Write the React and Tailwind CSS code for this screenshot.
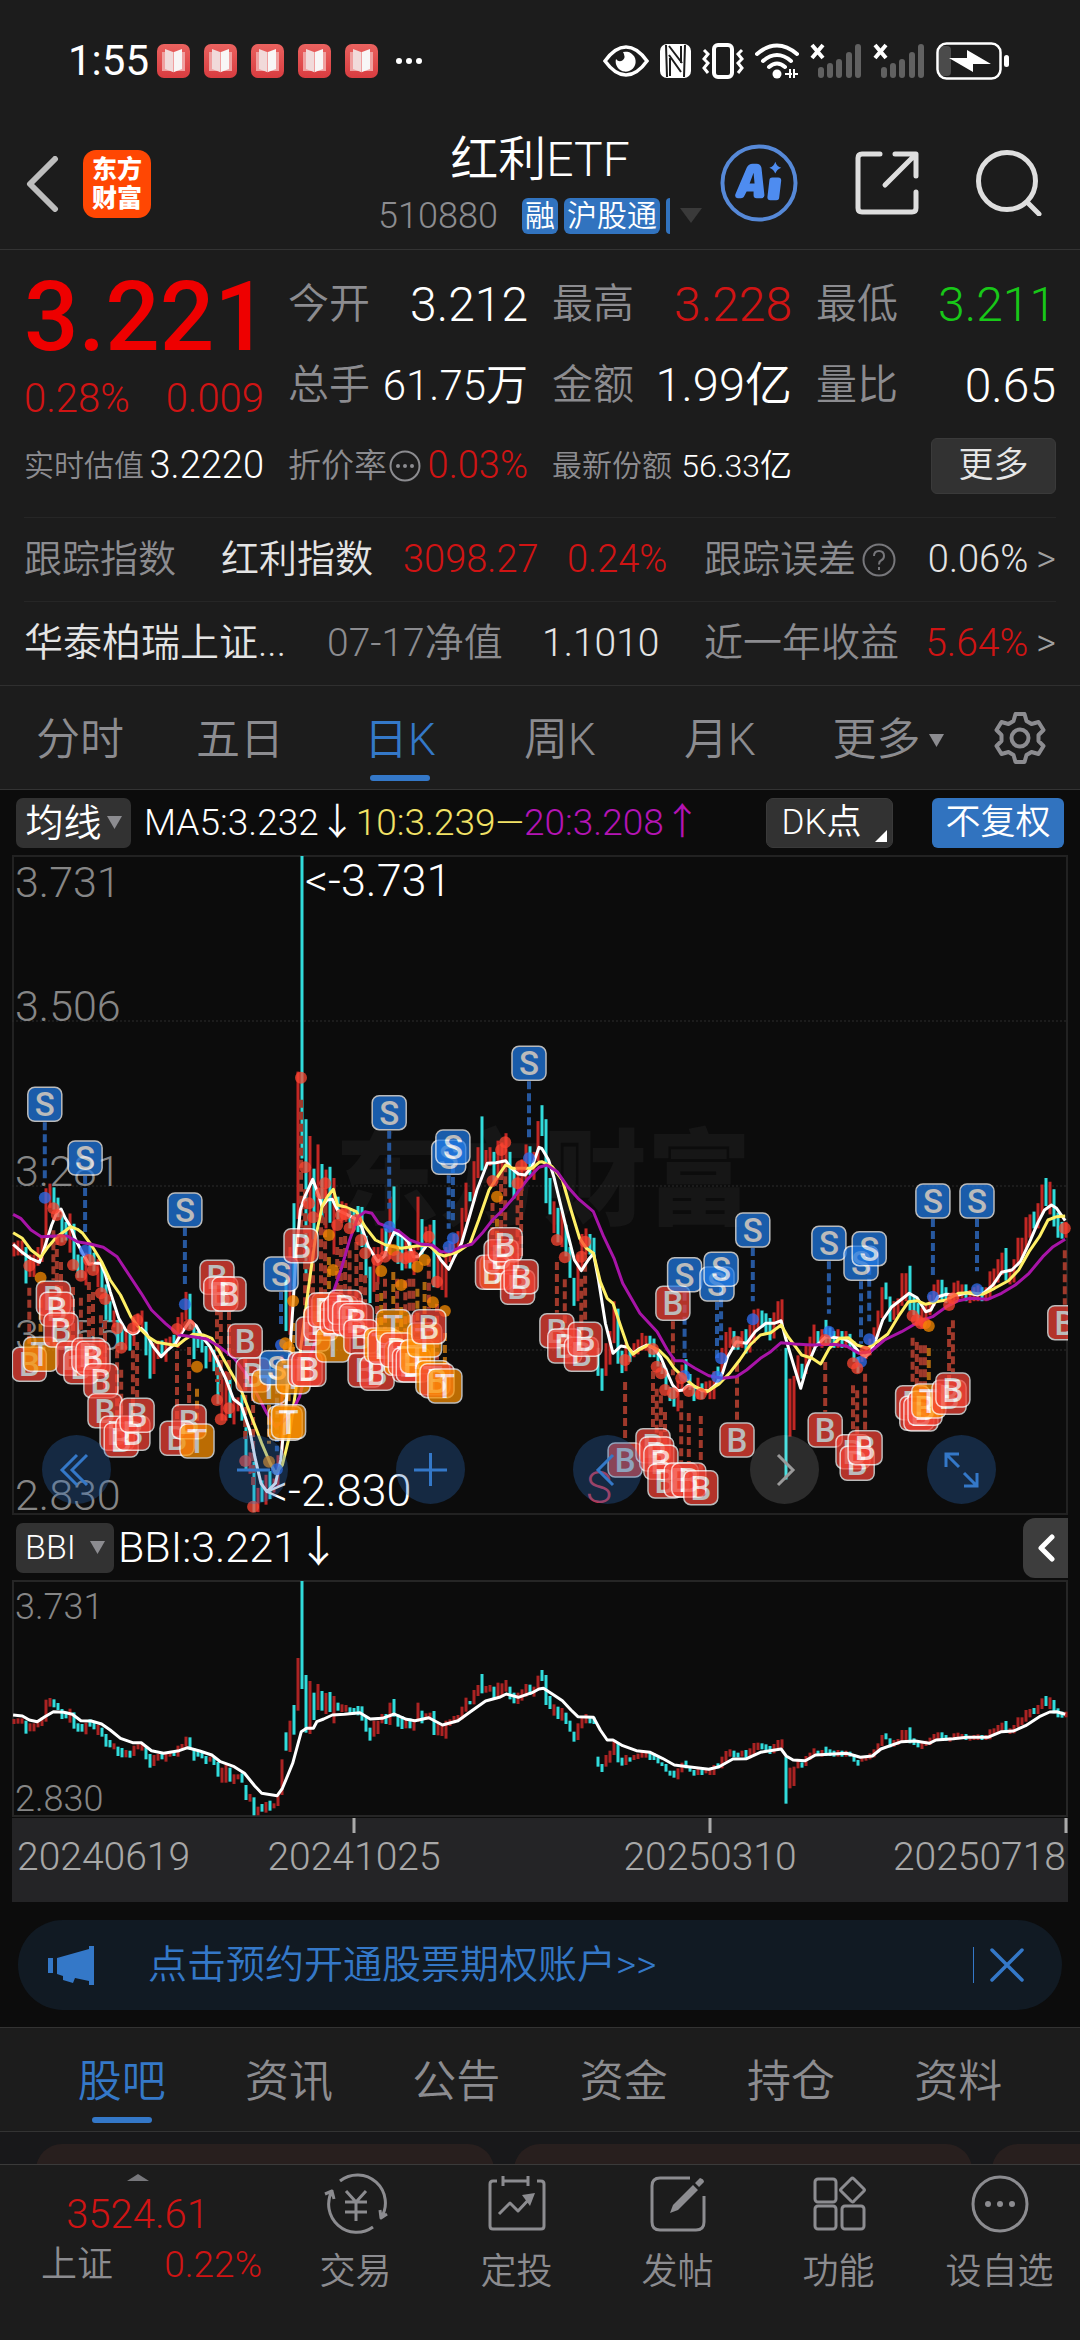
import React from 'react';

/* ---------- chart data ---------- */

// One entry per trading day: colour, top, bottom (third-pixel units of the lower chart).
const BARS = `r627-642 r625-641 r625-641 c632-671 r640-664 r640-664 r632-652 r622-648 r569-635 r564-590 c568-592 c579-600 c597-627 c605-625 r596-638 c607-656 c640-665 c642-665 r638-673 c628-650 c638-658 r645-675 c653-680 c672-710 c690-712 r700-718 c710-738 c714-742 r720-742 c722-743 r707-738 r703-718 r700-722 c712-748 c732-773 r735-768 r732-752 c732-748 r730-755 r728-740 c726-738 r707-740 r702-720 r680-710 c682-720 c715-752 c722-740 c728-745 c738-762 r740-755 c742-765 c756-800 r773-818 r765-818 c773-815 r793-822 r793-808 c790-818 c825-870 r852-875 c862-916 r890-916 c882-905 r876-908 c872-902 r880-895 r855-888 r748-855 c667-722 r632-726 c585-674 r444-602 c213-537 c495-668 r513-672 c548-630 r522-600 c543-602 r549-612 c546-606 r558-640 c578-602 r583-606 r585-605 c592-612 c594-614 c588-616 c589-632 c620-665 c653-692 r632-680 r632-672 r612-640 c612-642 r578-645 c567-620 c613-650 c618-657 r625-655 c625-655 r630-662 r578-635 c602-640 r610-630 r608-628 c603-675 r642-676 r648-678 r632-686 r628-648 r618-640 r615-632 r590-628 r563-605 c573-583 r540-583 r525-558 c492-550 r528-548 r525-545 c530-565 r518-560 r520-558 r510-545 c530-568 c548-580 r548-582 r538-572 r522-560 c524-555 r530-560 r497-540 c480-513 c495-585 c558-597 r583-617 c590-627 r594-632 c608-642 c632-665 c665-695 r640-690 r618-655 r612-640 c618-640 c622-642 c740-770 c762-786 r735-770 r722-758 r690-735 c698-757 c743-767 r735-765 c742-755 r735-750 r731-747 r724-743 r727-743 c727-750 c730-750 c742-760 c757-768 c762-785 c782-797 c782-803 r775-808 r758-787 c752-775 c768-785 c780-797 r772-795 c778-795 r776-790 r775-795 r765-795 c760-775 r740-775 r723-755 r718-740 c722-742 c728-742 r722-740 c720-746 r715-745 r699-735 r698-720 c700-718 c703-725 c708-732 r702-730 r690-715 r688-715 c740-881 r773-835 r770-828 r748-775 c757-773 r738-768 r728-750 r715-740 c722-738 r720-740 c710-738 c718-738 c722-740 r720-740 c722-740 r722-740 c725-740 c733-755 c750-767 r742-755 r738-752 r730-748 r718-742 r700-728 r675-708 c670-688 c685-712 r690-710 r687-705 r660-695 r660-690 c652-700 c685-705 c692-712 r697-717 r692-708 r683-705 r672-695 r667-690 c667-690 c675-692 r682-695 r670-690 r668-688 r672-687 c672-690 r678-692 r675-690 r673-690 c675-690 r675-690 r658-688 r655-675 r645-670 r638-662 c633-668 r655-672 r645-670 r622-652 r622-645 r600-635 r597-622 c594-612 r585-612 r565-597 c558-588 r562-597 c570-610 c595-622 c605-623 r605-622`
  .split(' ')
  .map((s, i) => {
    const [top, bottom] = s.slice(1).split('-').map(Number);
    return { x: 2 + i * 4, up: s[0] === 'r', top: (top - 213) / 3, bottom: (bottom - 213) / 3 };
  });

// Line series: "x,y" pairs, split in a left and a right half.
const HALF = 1568;
const px = (x, half) => Math.round(((x + half) / 2.9037 - 12) * 10) / 10;
const line = (left, right, toY) =>
  [[left, 0], [right, HALF]]
    .flatMap(([s, half]) =>
      s.split(' ').map((p) => {
        const [x, y] = p.split(',').map(Number);
        return `${px(x, half)},${Math.round(toY(y) * 10) / 10}`;
      })
    )
    .join(' ');
const mainY = (y) => y / 3 + 255;
const subY = (y) => (y - 213) / 3 + 1;

const MA5 = line(
  '38,403 62,425 88,445 115,457 130,410 150,345 165,308 177,297 190,325 205,350 220,390 240,430 258,463 275,460 292,460 305,490 320,545 345,625 365,660 385,672 398,668 410,655 425,670 445,710 468,740 485,722 510,700 530,665 552,632 570,648 590,685 610,710 630,750 655,805 678,868 700,885 725,960 740,1040 758,1120 775,1145 800,1120 815,1050 830,900 850,600 860,430 872,300 885,260 908,208 925,255 935,290 950,270 965,268 980,300 1000,310 1030,325 1050,350 1070,410 1097,455 1115,440 1130,400 1145,365 1170,380 1185,395 1200,440 1215,440 1240,405 1260,415 1280,450 1303,478 1320,440 1340,400 1360,330 1385,240 1415,160 1440,158 1468,152 1485,175 1505,192 1525,195 1545,170 1565,112',
  '5,115 25,150 40,200 60,285 80,370 100,450 120,482 140,450 155,430 170,510 190,640 212,730 235,708 255,712 270,730 290,715 310,705 330,715 350,740 370,790 385,825 400,842 415,840 430,825 450,830 470,842 490,842 510,825 530,790 545,740 570,695 600,700 625,665 655,640 680,640 700,632 712,680 735,760 757,835 775,770 800,710 830,680 860,683 885,688 905,700 925,725 945,740 960,725 975,690 995,630 1020,592 1050,568 1072,550 1095,563 1120,605 1135,600 1155,560 1180,553 1215,555 1240,548 1270,555 1290,548 1315,525 1340,487 1370,480 1395,455 1420,400 1445,340 1465,300 1485,285 1500,295 1525,332',
  mainY
);
const MA10 = line(
  '38,368 65,385 90,420 118,442 140,410 165,380 190,362 205,350 225,358 240,370 265,405 295,455 320,510 350,555 380,620 405,655 430,680 455,697 485,702 515,707 535,690 560,673 590,675 615,685 640,730 670,785 700,840 730,920 760,1000 785,1060 800,1090 820,1065 840,980 860,830 875,700 895,540 915,390 935,290 950,260 968,238 980,285 1000,290 1035,305 1060,350 1090,390 1120,405 1165,415 1210,408 1245,405 1270,430 1290,438 1330,425 1365,400 1390,330 1420,240 1445,200 1468,165 1490,175 1545,175 1565,157',
  '5,155 35,170 65,210 90,300 115,385 135,415 155,430 175,515 195,565 212,580 235,650 255,710 270,733 290,718 315,705 345,720 370,745 390,775 420,805 450,830 485,845 520,822 550,790 580,750 610,705 640,675 670,668 700,645 720,680 760,735 790,745 815,762 840,715 870,685 895,683 920,705 950,715 980,695 1010,672 1040,620 1070,575 1095,572 1120,583 1150,575 1180,570 1215,550 1250,548 1285,553 1320,535 1360,512 1390,480 1420,425 1450,380 1475,330 1500,320 1525,318',
  mainY
);
const MA20 = line(
  '38,313 60,325 90,360 120,380 160,378 195,378 225,395 265,403 300,412 340,440 375,495 410,550 440,600 480,640 520,675 560,680 600,687 640,712 680,745 720,800 750,860 775,910 800,950 840,920 870,860 900,740 930,650 960,570 990,480 1015,390 1040,320 1060,305 1080,310 1100,340 1130,352 1160,365 1190,390 1225,403 1255,405 1280,425 1310,425 1340,410 1370,403 1400,370 1430,330 1460,300 1490,265 1530,210 1565,172',
  '20,165 50,185 80,230 110,265 155,305 185,380 215,445 240,520 290,610 340,665 370,720 392,752 415,752 450,775 490,797 530,805 570,800 600,780 640,745 670,725 700,698 740,702 790,705 850,703 890,708 925,730 960,725 1000,690 1050,665 1100,635 1140,620 1180,590 1215,572 1250,565 1300,568 1340,550 1380,525 1420,490 1460,440 1490,410 1525,388',
  mainY
);
const BBI = line(
  '38,615 65,618 85,630 108,635 130,620 155,605 185,607 210,613 235,632 265,633 295,642 320,660 350,685 385,698 410,698 440,722 475,730 520,722 545,713 580,723 615,735 640,755 680,770 710,790 740,828 760,850 805,857 820,835 850,760 875,665 890,655 910,655 920,635 940,627 965,615 1000,613 1045,608 1075,627 1110,625 1145,612 1180,628 1205,632 1245,623 1285,645 1330,632 1370,602 1410,573 1450,562 1470,552 1505,562 1545,548 1565,537',
  '10,535 40,555 65,572 90,600 110,620 155,622 175,660 195,690 212,690 240,707 280,722 320,727 355,745 390,765 430,770 490,778 520,770 560,747 600,746 640,727 700,717 715,738 735,750 770,752 800,735 890,730 930,742 965,738 990,717 1050,695 1090,693 1130,700 1150,690 1200,686 1240,682 1300,682 1340,665 1375,663 1410,647 1450,620 1480,606 1500,605 1525,613',
  subY
);

// Trade markers: letter, x, badge y, dot y.
const marks = (s, half) =>
  s.split(' ').map((m) => {
    const [x, y, dot] = m.slice(1).split(',').map(Number);
    return { k: m[0], x: px(x, half), y: mainY(y), dot: mainY(dot) };
  });
const MARKS = [
  ...marks(
    'S130,-17,263 S247,144,422 S537,300,583 S1130,8,350 S1303,142,410 S1315,111,385 S1536,-140,145 B85,763,467 T118,733,503 B155,565,295 B165,598,315 B177,660,390 B212,745,465 B235,770,497 B258,735,450 B270,745,480 B293,812,550 B305,902,567 B340,970,655 B352,990,713 B386,970,655 B398,916,630 B514,985,657 B549,935,645 T572,993,770 B630,502,870 B641,552,928 B665,552,895 B712,693,1053 B735,795,1190 T781,830,1055 S816,492,705 S804,773,1078 T828,940,700 T838,935,712 T851,800,573 B874,407,-97 B886,778,172 B897,778,280 B909,672,322 B932,640,250 T955,600,375 T967,705,480 B944,600,220 B979,620,345 B990,610,315 B1002,592,312 B1015,625,355 B1035,632,330 B1048,680,390 B1060,780,430 B1095,790,450 T1107,705,483 B1118,712,440 T1142,650,420 T1165,745,525 B1153,720,440 B1177,745,445 B1189,765,440 B1200,765,440 T1212,740,470 T1233,690,450 B1245,650,380 T1257,803,577 B1269,812,515 T1292,828,603 T1443,487,260 B1430,487,213 B1455,440,120 B1467,404,97 B1503,532,220 B1513,500,168',
    0
  ),
  ...marks(
    'B49,662,390 B72,708,442 B120,733,440 B131,688,395 B247,1050,750 B386,580,850 S420,494,798 S514,522,800 S526,478,745 S618,360,628 B328,1007,717 B339,1032,770 B351,1057,790 B363,1113,840 B410,1110,805 B432,1110,843 B467,1133,852 B572,990,695 S839,400,665 B828,960,690 S932,460,755 S956,416,688 B909,1025,760 B921,1060,775 B944,1013,725 S1141,273,560 S1269,273,538 B1082,878,617 B1094,910,630 B1106,912,640 B1118,895,640 T1129,873,648 B1188,862,585 B1199,840,565 B1524,638,355',
    HALF
  ),
];
const MARK_FILL = { B: '#f44336', S: '#207be8', T: '#ff9200' };
const MARK_LINE = { B: '#a0392b', S: '#27589f', T: '#ab6710' };
const MARK_DOT = { B: '#fb4632', S: '#2f6df0', T: '#f58a00' };

const UP = '#c22724';
const DOWN = '#31dcdc';

/* ---------- small icons ---------- */

const BookBadge = () => (
  <svg className="h-[34px] w-[33px]" viewBox="0 0 33 34" aria-hidden="true">
    <defs>
      <linearGradient id="book" x1="0" y1="0" x2="0" y2="1">
        <stop offset="0" stopColor="#ea625f" />
        <stop offset="1" stopColor="#d93c40" />
      </linearGradient>
    </defs>
    <rect width="33" height="34" rx="7" fill="url(#book)" />
    <path d="M5 8h23v19H18l-1.500 1.500L15 27H5z" fill="#f0a0a0" />
    <path d="M8 5l8 3v20l-8-3z" fill="#f1dada" />
    <path d="M25 5l-8 3v20l8-3z" fill="#f8f6f6" />
  </svg>
);

const Signal = () => (
  <svg className="h-9 w-[52px]" viewBox="0 0 52 36" aria-hidden="true">
    <path d="M2 2l11 13M13 2L2 15" stroke="#fff" strokeWidth="4" />
    <g stroke="#616161" strokeWidth="6" strokeLinecap="round">
      <path d="M11 27v5M20 23v9M29 19v13M39 12v20M48 4v28" />
    </g>
  </svg>
);

const StatusIcons = () => (
  <div className="flex items-center gap-[11px]">
    <svg className="h-9 w-[46px]" viewBox="0 0 46 36" aria-hidden="true">
      <path d="M2 18Q12 4 23 4t21 14Q34 32 23 32T2 18z" fill="none" stroke="#fff" strokeWidth="3.500" />
      <path d="M20 9a10 10 0 1 1-7 7q3 4 7 1 3-3 0-8z" fill="#fff" />
    </svg>
    <svg className="h-[34px] w-[31px]" viewBox="0 0 31 34" aria-hidden="true">
      <rect width="31" height="34" rx="7" fill="#fff" />
      <path d="M6 1l1 32M25 1l-1 32" stroke="#1c1c1c" strokeWidth="2" />
      <path d="M9 2l13 17M9 11l12 17M10 14v18M21 2v17" stroke="#1c1c1c" strokeWidth="2" fill="none" />
    </svg>
    <svg className="h-9 w-[42px]" viewBox="0 0 42 36" aria-hidden="true">
      <rect x="12" y="2" width="18" height="32" rx="4" fill="none" stroke="#fff" strokeWidth="4" />
      <path d="M2 7l4 4-4 5 4 4-4 5 4 5M40 7l-4 4 4 5-4 4 4 5-4 5" fill="none" stroke="#fff" strokeWidth="3" />
    </svg>
    <svg className="h-9 w-[44px]" viewBox="0 0 44 36" aria-hidden="true">
      <g fill="none" stroke="#fff" strokeWidth="4" strokeLinecap="round">
        <path d="M2 11q20-17 40 0M8 18q14-12 28 0M14 24q8-7 16 0" />
      </g>
      <circle cx="22" cy="31" r="4.500" fill="#fff" />
      <path d="M30 31h7M35 26v9" stroke="#fff" strokeWidth="2" fill="none" />
      <path d="M39 26v9M43 31h-4" stroke="#fff" strokeWidth="2" fill="none" />
    </svg>
    <Signal />
    <Signal />
    <svg className="h-[38px] w-[74px]" viewBox="0 0 74 38" aria-hidden="true">
      <rect x="3" y="4" width="12" height="30" rx="4" fill="#4b4b4b" />
      <rect x="1.500" y="1.500" width="63" height="35" rx="9" fill="none" stroke="#fff" strokeWidth="2.500" />
      <path d="M13 16l18 0V8l24 14H37v8z" fill="#fff" />
      <rect x="68" y="13" width="5" height="12" rx="2.500" fill="#fff" />
    </svg>
  </div>
);

/* ---------- sections ---------- */

const Header = () => (
  <header className="border-b border-[#333333]">
    <div className="flex h-[122px] items-center justify-between pl-[68px] pr-[70px]">
      <div className="flex items-center">
        <span className="w-[89px] text-[42px] font-normal leading-[48px]">1:55</span>
        <span className="flex gap-[14px]">
          {[0, 1, 2, 3, 4].map((i) => (
            <BookBadge key={i} />
          ))}
        </span>
        <span className="ml-[18px] flex gap-1">
          {[0, 1, 2].map((i) => (
            <i key={i} className="size-[6px] rounded-full bg-white" />
          ))}
        </span>
      </div>
      <StatusIcons />
    </div>
    <div className="grid h-[127px] grid-cols-[1fr_auto_1fr] items-center">
      <div className="flex items-center gap-[22px] pb-1 pl-6">
        <button aria-label="返回" className="h-14 w-[37px]">
          <svg viewBox="0 0 37 56" className="size-full" fill="none" stroke="#bdbdbd" strokeWidth="6" strokeLinecap="round" strokeLinejoin="round">
            <path d="M31 3L6 28l25 25" />
          </svg>
        </button>
        <span className="grid size-[68px] place-content-center rounded-[13px] bg-[#ff4703] text-center text-[25px] font-black leading-[29px]">
          <span>东方</span>
          <span>财富</span>
        </span>
      </div>
      <div className="flex flex-col items-center">
        <h1 className="text-[48px] leading-[60px]">红利ETF</h1>
        <div className="flex h-[52px] items-center gap-[6px]">
          <span className="mr-[18px] text-[36px] text-[#8c8c90]">510880</span>
          <span className="rounded-[6px] bg-[#3173bf] px-[3px] text-[30px] leading-[36px]">融</span>
          <span className="rounded-[6px] bg-[#3173bf] px-[3px] text-[30px] leading-[36px]">沪股通</span>
          <span className="h-9 w-1 rounded-l-[4px] bg-[#3173bf]" />
          <svg className="ml-1 h-[15px] w-[22px]" viewBox="0 0 22 15" aria-hidden="true">
            <path d="M0 0h22L11 15z" fill="#3a3a3a" />
          </svg>
        </div>
      </div>
      <div className="flex items-center justify-end gap-[57px] pb-[6px] pr-[38px]">
        <button aria-label="AI" className="size-[78px]">
          <svg viewBox="0 0 79 79" className="size-full">
            <circle cx="39.500" cy="39.500" r="37" fill="none" stroke="#5689d8" strokeWidth="4" />
            <path
              d="M16 50L27 24q2-4 6-4h4q4 0 5 4l3 28q0 3-3 3h-5q-3 0-3-3v-4h-7l-2 4q-1 3-4 3h-3q-4-1-2-5zm14-10h5l-1-11z"
              fill="#4e8cf0"
            />
            <path d="M53 34h6q3 0 3 3l-2 17q0 3-3 3h-6q-3 0-3-3l2-17q0-3 3-3z" fill="#4e8cf0" />
            <path d="M56 18q1.500 5 6 6-4.500 1.500-6 6-1.500-4.500-6-6 4.500-1 6-6z" fill="#4e8cf0" />
          </svg>
        </button>
        <button aria-label="分享" className="size-[64px]">
          <svg viewBox="0 0 64 64" className="size-full" fill="none" stroke="#dedede" strokeWidth="5" strokeLinecap="round" strokeLinejoin="round">
            <path d="M25 3H7q-4 0-4 4v50q0 4 4 4h50q4 0 4-4V41M40 3h21v22M60 4L30 34" />
          </svg>
        </button>
        <button aria-label="搜索" className="size-[66px]">
          <svg viewBox="0 0 66 66" className="size-full" fill="none" stroke="#dedede" strokeWidth="5" strokeLinecap="round">
            <circle cx="31" cy="31" r="28.500" />
            <path d="M51 52l12 12" />
          </svg>
        </button>
      </div>
    </div>
  </header>
);

const LABEL = 'text-[#8c8c90]';

const Stat = ({ label, value, tone }) => (
  <div className="flex h-[81px] items-center justify-between whitespace-nowrap">
    <span className={`text-[41px] ${LABEL}`}>{label}</span>
    <span className={tone}>{value}</span>
  </div>
);

const Quote = () => (
  <section className="border-b border-[#2f2f2f] px-6 pt-[14px]">
    <div className="grid grid-cols-4 gap-x-6">
      <div className="row-span-2 flex flex-col justify-between">
        <strong className="pt-[3px] text-[96px] font-medium leading-[100px] text-[#ee0000]">3.221</strong>
        <div className="flex justify-between pb-[2px] text-[40px] leading-[50px] text-[#d01414]">
          <span>0.28%</span>
          <span>0.009</span>
        </div>
      </div>
      <Stat label="今开" value="3.212" tone="text-[48px]" />
      <Stat label="最高" value="3.228" tone="text-[48px] text-[#d01414]" />
      <Stat label="最低" value="3.211" tone="text-[48px] text-[#18c818]" />
      <Stat label="总手" value="61.75万" tone="text-[42px]" />
      <Stat label="金额" value="1.99亿" tone="text-[47px]" />
      <Stat label="量比" value="0.65" tone="text-[48px]" />
      <div className="flex h-[79px] items-center justify-between whitespace-nowrap">
        <span className={`text-[30px] ${LABEL}`}>实时估值</span>
        <span className="text-[38px]">3.2220</span>
      </div>
      <div className="flex h-[79px] items-center justify-between whitespace-nowrap">
        <span className={`flex items-center gap-[2px] text-[33px] ${LABEL}`}>
          折价率
          <svg className="size-8" viewBox="0 0 32 32" aria-hidden="true">
            <circle cx="16" cy="16" r="14.500" fill="none" stroke="#8c8c90" strokeWidth="2" />
            <g fill="#8c8c90">
              <circle cx="9" cy="16" r="2" />
              <circle cx="16" cy="16" r="2" />
              <circle cx="23" cy="16" r="2" />
            </g>
          </svg>
        </span>
        <span className="text-[38px] text-[#d01414]">0.03%</span>
      </div>
      <div className="flex h-[79px] items-center justify-between whitespace-nowrap">
        <span className={`text-[30px] ${LABEL}`}>最新份额</span>
        <span className="text-[32px]">56.33亿</span>
      </div>
      <div className="flex h-[79px] items-center justify-end">
        <button className="h-[56px] w-[125px] rounded-[6px] border border-[#3a3a3a] bg-[#323232] text-[35px] leading-[48px] text-[#e6e6e6]">更多</button>
      </div>
    </div>
    <a href="#index" className="mt-[12px] grid h-[84px] grid-cols-[197px_182px_164px_137px_1fr] items-center whitespace-nowrap border-t border-[#262626] text-[38px]">
      <span className={LABEL}>跟踪指数</span>
      <span className="text-[#e4e4e4]">红利指数</span>
      <span className="text-[#d01414]">3098.27</span>
      <span className="text-[#d01414]">0.24%</span>
      <span className="flex items-center">
        <span className={LABEL}>跟踪误差</span>
        <svg className="ml-[6px] size-[34px]" viewBox="0 0 34 34" fill="none" stroke="#77777b" strokeWidth="2" aria-hidden="true">
          <circle cx="17" cy="17" r="15.500" />
          <path d="M12 13q0-5 5-5t5 5q0 3-3 4.500-2 1-2 4M17 24v3" />
        </svg>
        <span className="ml-auto text-[#e4e4e4]">0.06%</span>
        <span className="ml-2 text-[#a0a0a0]">&gt;</span>
      </span>
    </a>
    <a href="#fund" className="grid h-[84px] grid-cols-[303px_215px_162px_1fr] items-center whitespace-nowrap border-t border-[#262626] text-[39px]">
      <span className="text-[#e4e4e4]">华泰柏瑞上证...</span>
      <span className={LABEL}>07-17净值</span>
      <span className="text-[#e4e4e4]">1.1010</span>
      <span className="flex items-center">
        <span className={LABEL}>近一年收益</span>
        <span className="ml-auto text-[#d01414]">5.64%</span>
        <span className="ml-2 text-[38px] text-[#a0a0a0]">&gt;</span>
      </span>
    </a>
  </section>
);

const Tab = ({ children, active }) => (
  <button
    aria-current={active ? 'true' : undefined}
    className={`flex h-[103px] flex-col items-center pt-6 text-[44px] leading-[60px] ${active ? 'text-[#3478c8]' : 'text-[#8c8c90]'}`}
  >
    {children}
    {active && <i className="mt-[5px] h-[6px] w-[60px] shrink-0 rounded-full bg-[#3478c8]" />}
  </button>
);

const Caret = () => (
  <svg className="h-[13px] w-[15px]" viewBox="0 0 15 13" aria-hidden="true">
    <path d="M0 0h15L7.500 13z" fill="#8c8c90" />
  </svg>
);

const PeriodTabs = () => (
  <nav className="grid grid-cols-[4fr_4fr_4fr_4fr_4fr_4fr_3fr] border-b border-[#333333]">
    <Tab>分时</Tab>
    <Tab>五日</Tab>
    <Tab active>日K</Tab>
    <Tab>周K</Tab>
    <Tab>月K</Tab>
    <Tab>
      <span className="flex items-center gap-2 pl-4">
        更多
        <Caret />
      </span>
    </Tab>
    <button aria-label="设置" className="flex items-center justify-center">
      <svg className="size-[52px]" viewBox="0 0 52 52" fill="none" stroke="#8c8c90" strokeWidth="4" strokeLinejoin="round">
        <path d="M21.500 2h9l2 7 5 3 7-2 5 8-5 5v6l5 5-5 8-7-2-5 3-2 7h-9l-2-7-5-3-7 2-5-8 5-5v-6l-5-5 5-8 7 2 5-3z" />
        <circle cx="26" cy="26" r="8.500" />
      </svg>
    </button>
  </nav>
);

const MainToolbar = () => (
  <div className="flex h-[65px] items-center whitespace-nowrap pl-4 pr-4 text-[37px]">
    <button className="flex h-[50px] w-[115px] items-center justify-center gap-[5px] rounded-[7px] bg-[#323232] text-[38px] leading-[44px]">
      均线
      <Caret />
    </button>
    <span className="ml-[13px]">MA5:3.232↓</span>
    <span className="text-[#f2e266]">10:3.239—</span>
    <span className="text-[#b414b4]">20:3.208↑</span>
    <button className="relative ml-auto h-[50px] w-[127px] rounded-[7px] border border-[#3a3a3a] bg-[#323232] pr-4 text-[35px] leading-[44px]">
      DK点
      <svg className="absolute bottom-[5px] right-[5px] size-[12px]" viewBox="0 0 12 12" aria-hidden="true">
        <path d="M12 0v12H0z" fill="#fff" />
      </svg>
    </button>
    <button className="ml-[39px] h-[50px] w-[132px] rounded-[6px] bg-[#3173bf] text-[35px] leading-[46px]">不复权</button>
  </div>
);

const Marker = ({ m }) => {
  const above = m.y < m.dot;
  const from = above ? m.y + 18 : m.dot + 22;
  const to = above ? m.dot - 18 : m.y - 18;
  return (
    <path d={`M${m.x} ${from}V${Math.max(from, to)}`} stroke={MARK_LINE[m.k]} strokeWidth="4" strokeDasharray="8 4" />
  );
};

const Badge = ({ m }) => (
  <g opacity="0.72">
    <rect x={m.x - 17} y={m.y - 17} width="34" height="34" rx="7" fill={MARK_FILL[m.k]} stroke="#fff" strokeWidth="1.500" />
    <text x={m.x} y={m.y + 12} textAnchor="middle" fontSize="33" fontWeight="500" fill="#fff">
      {m.k}
    </text>
  </g>
);

const RoundButton = ({ label, gray, children }) => (
  <button aria-label={label} className={`size-[69px] rounded-full ${gray ? 'bg-white/13' : 'bg-[#2c6cc0]/30'}`}>
    <svg
      viewBox="0 0 69 69"
      className={`size-full ${gray ? 'text-[#9a9a9a]' : 'text-[#3478c8]'}`}
      fill="none"
      stroke="currentColor"
      strokeWidth="3"
    >
      {children}
    </svg>
  </button>
);

const MainChart = () => (
  <div className="relative mx-3 border-2 border-[#222222]">
    <svg viewBox="2 2 1052 656" className="block w-full overflow-visible" role="img" aria-label="日K线图">
      <clipPath id="plot">
        <rect width="1056" height="660" />
      </clipPath>
      <g fill="#161616" fontSize="104" fontWeight="900">
        <text x="323" y="362">东方财富</text>
      </g>
      <g stroke="#2d2d2d" strokeWidth="1" strokeDasharray="2 2">
        <path d="M0 166H1056M0 331H1056M0 495H1056" />
      </g>
      <g fill="#868686" fontSize="43">
        <text x="3" y="42">3.731</text>
        <text x="3" y="166">3.506</text>
        <text x="3" y="331">3.281</text>
        <text x="3" y="495">3.055</text>
        <text x="3" y="655">2.830</text>
      </g>
      {BARS.map((b) => (
        <path key={b.x} d={`M${b.x} ${b.top * 2.8 + 1}V${b.bottom * 2.8 + 1}`} stroke={b.up ? UP : DOWN} strokeWidth="3" />
      ))}
      {MARKS.map((m) => (
        <Marker key={`${m.x}`} m={m} />
      ))}
      <g fill="none" strokeWidth="3" strokeLinejoin="round">
        <polyline points={MA5} stroke="#fff" />
        <polyline points={MA10} stroke="#fff066" />
        <polyline points={MA20} stroke="#a814a8" />
      </g>
      {MARKS.map((m) => (
        <circle key={`${m.x}`} cx={m.x} cy={m.dot} r="6" fill={MARK_DOT[m.k]} opacity="0.75" />
      ))}
      <g clipPath="url(#plot)">
        {MARKS.map((m) => (
          <Badge key={`${m.x}`} m={m} />
        ))}
      </g>
      <g fill="#fff" fontSize="45">
        <text x="293" y="41">&lt;-3.731</text>
        <text x="253" y="651">&lt;-2.830</text>
      </g>
      <text x="574" y="648" fill="#c83246" fontSize="44">S</text>
    </svg>
    <div className="absolute bottom-[9px] left-[-26px] right-4 grid grid-cols-6 place-items-center">
      <RoundButton label="快退">
        <path d="M35 20L20 35l15 15M45 20L30 35l15 15" />
      </RoundButton>
      <RoundButton label="缩小">
        <path d="M18 35h33" />
      </RoundButton>
      <RoundButton label="放大">
        <path d="M18 35h33M34.500 18v33" />
      </RoundButton>
      <RoundButton label="左移">
        <path d="M40 20L25 35l15 15" />
      </RoundButton>
      <RoundButton label="右移" gray>
        <path d="M28 20l15 15-15 15" />
      </RoundButton>
      <RoundButton label="全屏">
        <path d="M32 19H19v13M19 19l13 13M37 51h13V38M50 51L37 38" />
      </RoundButton>
    </div>
  </div>
);

const SubChart = () => (
  <>
    <div className="ml-4 mr-3 flex h-[65px] items-center">
      <button className="flex h-[50px] w-[98px] items-center justify-center gap-[14px] rounded-[7px] bg-[#323232] text-[34px]">
        BBI
        <Caret />
      </button>
      <span className="ml-1 text-[43px]">BBI:3.221↓</span>
      <button aria-label="展开" className="ml-auto grid h-[60px] w-[45px] place-content-center rounded-l-[12px] bg-[#3d3d3d]">
        <svg className="h-[30px] w-[18px]" viewBox="0 0 18 30" fill="none" stroke="#fff" strokeWidth="5" strokeLinecap="round" strokeLinejoin="round">
          <path d="M15 4L4 15l11 11" />
        </svg>
      </button>
    </div>
    <div className="mx-3 border-2 border-[#262626]">
      <svg viewBox="2 2 1052 233" className="block w-full overflow-visible" role="img" aria-label="BBI">
        <g fill="#868686" fontSize="36">
          <text x="3" y="39">3.731</text>
          <text x="3" y="231">2.830</text>
        </g>
        {BARS.map((b) => (
          <path key={b.x} d={`M${b.x} ${b.top + 1}V${b.bottom + 1}`} stroke={b.up ? '#ab2323' : DOWN} strokeWidth="3" />
        ))}
        <polyline points={BBI} fill="none" stroke="#fff" strokeWidth="3" strokeLinejoin="round" />
      </svg>
    </div>
    <div className="mx-3 mt-px bg-[#242426] pb-[25px]">
      <svg viewBox="0 0 1056 59" className="block w-full">
        <path d="M342 0v15M698 0v15M1054 0v15" stroke="#aaa" strokeWidth="3" />
        <g fill="#a8a8a8" fontSize="39">
          <text x="5" y="52">20240619</text>
          <text x="342" y="52" textAnchor="middle">20241025</text>
          <text x="698" y="52" textAnchor="middle">20250310</text>
          <text x="1054" y="52" textAnchor="end">20250718</text>
        </g>
      </svg>
    </div>
  </>
);

const Banner = () => (
  <div className="mx-[18px] mb-[17px] mt-[18px] flex h-[90px] items-center rounded-full bg-[#111a23] pl-[30px] pr-[38px] text-[#3478c8]">
    <svg className="h-[39px] w-[46px]" viewBox="0 0 46 39" fill="currentColor" aria-hidden="true">
      <path d="M0 12h5v15H0zM9 12l32-9V0h5v39h-5v-4l-14-3-2 5-10-3v-4l-6-2z" />
    </svg>
    <a href="#options" className="ml-[54px] text-[39px]">
      点击预约开通股票期权账户&gt;&gt;
    </a>
    <i className="ml-auto mr-[16px] h-9 w-px bg-[#3478c8]" />
    <button aria-label="关闭" className="size-[34px]">
      <svg viewBox="0 0 34 34" className="size-full" stroke="currentColor" strokeWidth="3.500" strokeLinecap="round">
        <path d="M2 2l30 30M32 2L2 32" />
      </svg>
    </button>
  </div>
);

const NavItem = ({ label, children }) => (
  <button className="flex flex-col items-center pt-[8px]">
    <svg className="size-[64px]" viewBox="0 0 64 64" fill="none" stroke="#8c8c90" strokeWidth="3" strokeLinejoin="round" aria-hidden="true">
      {children}
    </svg>
    <span className="mt-[9px] text-[36px] leading-[52px] text-[#8c8c90]">{label}</span>
  </button>
);

const BottomNav = () => (
  <nav className="grid min-h-[176px] grow grid-cols-[275fr_161fr_161fr_161fr_161fr_161fr] border-t border-[#3a3a3a] bg-[#1c1c1c]">
    <button className="flex flex-col items-center pt-[9px]">
      <svg className="h-[7px] w-[22px]" viewBox="0 0 22 7" aria-hidden="true">
        <path d="M11 0l11 7H0z" fill="#77777b" />
      </svg>
      <span className="mt-[9px] text-[40px] leading-[50px] text-[#d01414]">3524.61</span>
      <span className="flex w-full items-center justify-between pl-[41px] pr-[13px] leading-[50px]">
        <span className="text-[36px] text-[#8c8c90]">上证</span>
        <span className="text-[37px] text-[#d01414]">0.22%</span>
      </span>
    </button>
    <NavItem label="交易">
      <path d="M16 8A28 28 0 0 1 57 45l6-4M57 45l-1-8M49 54A28 28 0 0 1 8 18l-7 3M8 18l2 8" />
      <path d="M22 18l10 11 10-11M32 29v19M21 29h22M21 39h22" />
    </NavItem>
    <NavItem label="定投">
      <path d="M12 8H8q-3 0-3 3v42q0 3 3 3h48q3 0 3-3V11q0-3-3-3h-4M18 3v10M43 3v10M18 8h25" />
      <path d="M14 41l11-11 8 8 14-15" />
      <path d="M37 22l13-2-5 13z" fill="#8c8c90" stroke="none" />
    </NavItem>
    <NavItem label="发帖">
      <path d="M44 5H14q-8 0-8 8v36q0 8 8 8h36q8 0 8-8V23" />
      <path d="M24 40l3-8 20-20 5 5-20 20zM49 10l5-5q4 1 4 4l-5 5z" fill="#8c8c90" stroke="none" />
    </NavItem>
    <NavItem label="功能">
      <rect x="8" y="6" width="21" height="23" rx="3" />
      <rect x="8" y="33" width="21" height="23" rx="3" />
      <rect x="35" y="33" width="22" height="23" rx="3" />
      <path d="M45 5q1 0 2 1l10 10q1 1 0 2L47 28q-1 2-3 0L34 18q-1-1 0-2L44 6z" />
    </NavItem>
    <NavItem label="设自选">
      <circle cx="32" cy="31" r="27" />
      <g fill="#8c8c90" stroke="none">
        <circle cx="20" cy="31" r="3" />
        <circle cx="32" cy="31" r="3" />
        <circle cx="44" cy="31" r="3" />
      </g>
    </NavItem>
  </nav>
);

export default function App() {
  return (
    <div className="flex min-h-screen flex-col overflow-hidden bg-[#1c1c1c] font-['Roboto','Noto_Sans_CJK_SC',sans-serif] font-[350] text-white">
      <Header />
      <main>
        <Quote />
        <PeriodTabs />
        <section className="flow-root bg-[#0c0c0c]">
          <MainToolbar />
          <MainChart />
          <SubChart />
          <Banner />
        </section>
        <nav className="grid grid-cols-6 border-y border-[#333333] px-[38px]">
          <Tab active>股吧</Tab>
          <Tab>资讯</Tab>
          <Tab>公告</Tab>
          <Tab>资金</Tab>
          <Tab>持仓</Tab>
          <Tab>资料</Tab>
        </nav>
        <div className="flex h-8 gap-5 overflow-hidden bg-[#18181a] pl-9 pt-3">
          <i className="h-20 w-[458px] shrink-0 rounded-[26px] bg-[#281f1e]" />
          <i className="h-20 w-[458px] shrink-0 rounded-[26px] bg-[#281f1e]" />
          <i className="h-20 w-[458px] shrink-0 rounded-[26px] bg-[#281f1e]" />
        </div>
      </main>
      <BottomNav />
    </div>
  );
}
